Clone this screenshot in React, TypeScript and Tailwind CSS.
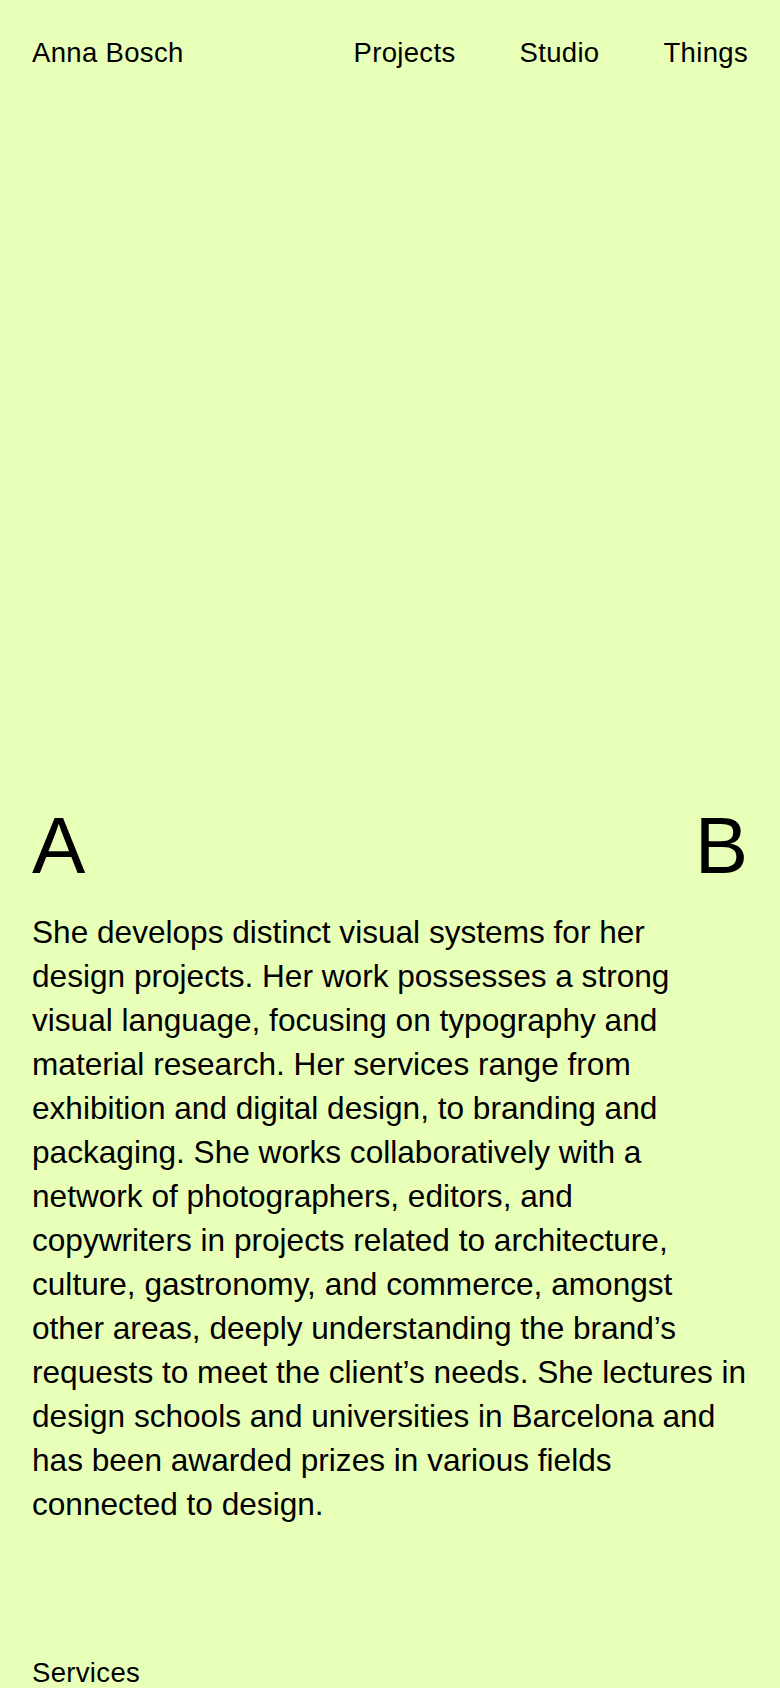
// App.tsx
const navItems = ["Projects", "Studio", "Things"];

// Lines kept as in the layout so the wrap matches
const aboutLines = [
  "She develops distinct visual systems for her",
  "design projects. Her work possesses a strong",
  "visual language, focusing on typography and",
  "material research. Her services range from",
  "exhibition and digital design, to branding and",
  "packaging. She works collaboratively with a",
  "network of photographers, editors, and",
  "copywriters in projects related to architecture,",
  "culture, gastronomy, and commerce, amongst",
  "other areas, deeply understanding the brand’s",
  "requests to meet the client’s needs. She lectures in",
  "design schools and universities in Barcelona and",
  "has been awarded prizes in various fields",
  "connected to design.",
];

export default function App() {
  return (
    <main
      className="min-h-screen bg-[#e8ffb8] px-8 text-black"
      style={{ fontFamily: '"Liberation Sans", Arial, sans-serif' }}
    >
      {/* Header */}
      <header className="flex items-center justify-between pt-[37px] text-[27.5px] leading-[32px] tracking-[0.012em]">
        <a href="#" className="whitespace-nowrap">
          Anna Bosch
        </a>
        <nav className="flex items-center gap-[64px]">
          {navItems.map((item) => (
            <a key={item} href="#" className="whitespace-nowrap">
              {item}
            </a>
          ))}
        </nav>
      </header>

      {/* Intro */}
      <section className="pt-[737px]">
        <div className="flex items-center justify-between text-[80px] leading-[80px]">
          <span>A</span>
          <span>B</span>
        </div>
        <p className="mt-[24px] text-[31.6px] leading-[44px]">
          {aboutLines.map((line) => (
            <span key={line} className="block whitespace-nowrap">
              {line}
            </span>
          ))}
        </p>
      </section>

      {/* Services */}
      <section className="pt-[131px]">
        <h2 className="text-[27.5px] leading-[32px] tracking-[0.012em]">Services</h2>
      </section>
    </main>
  );
}
